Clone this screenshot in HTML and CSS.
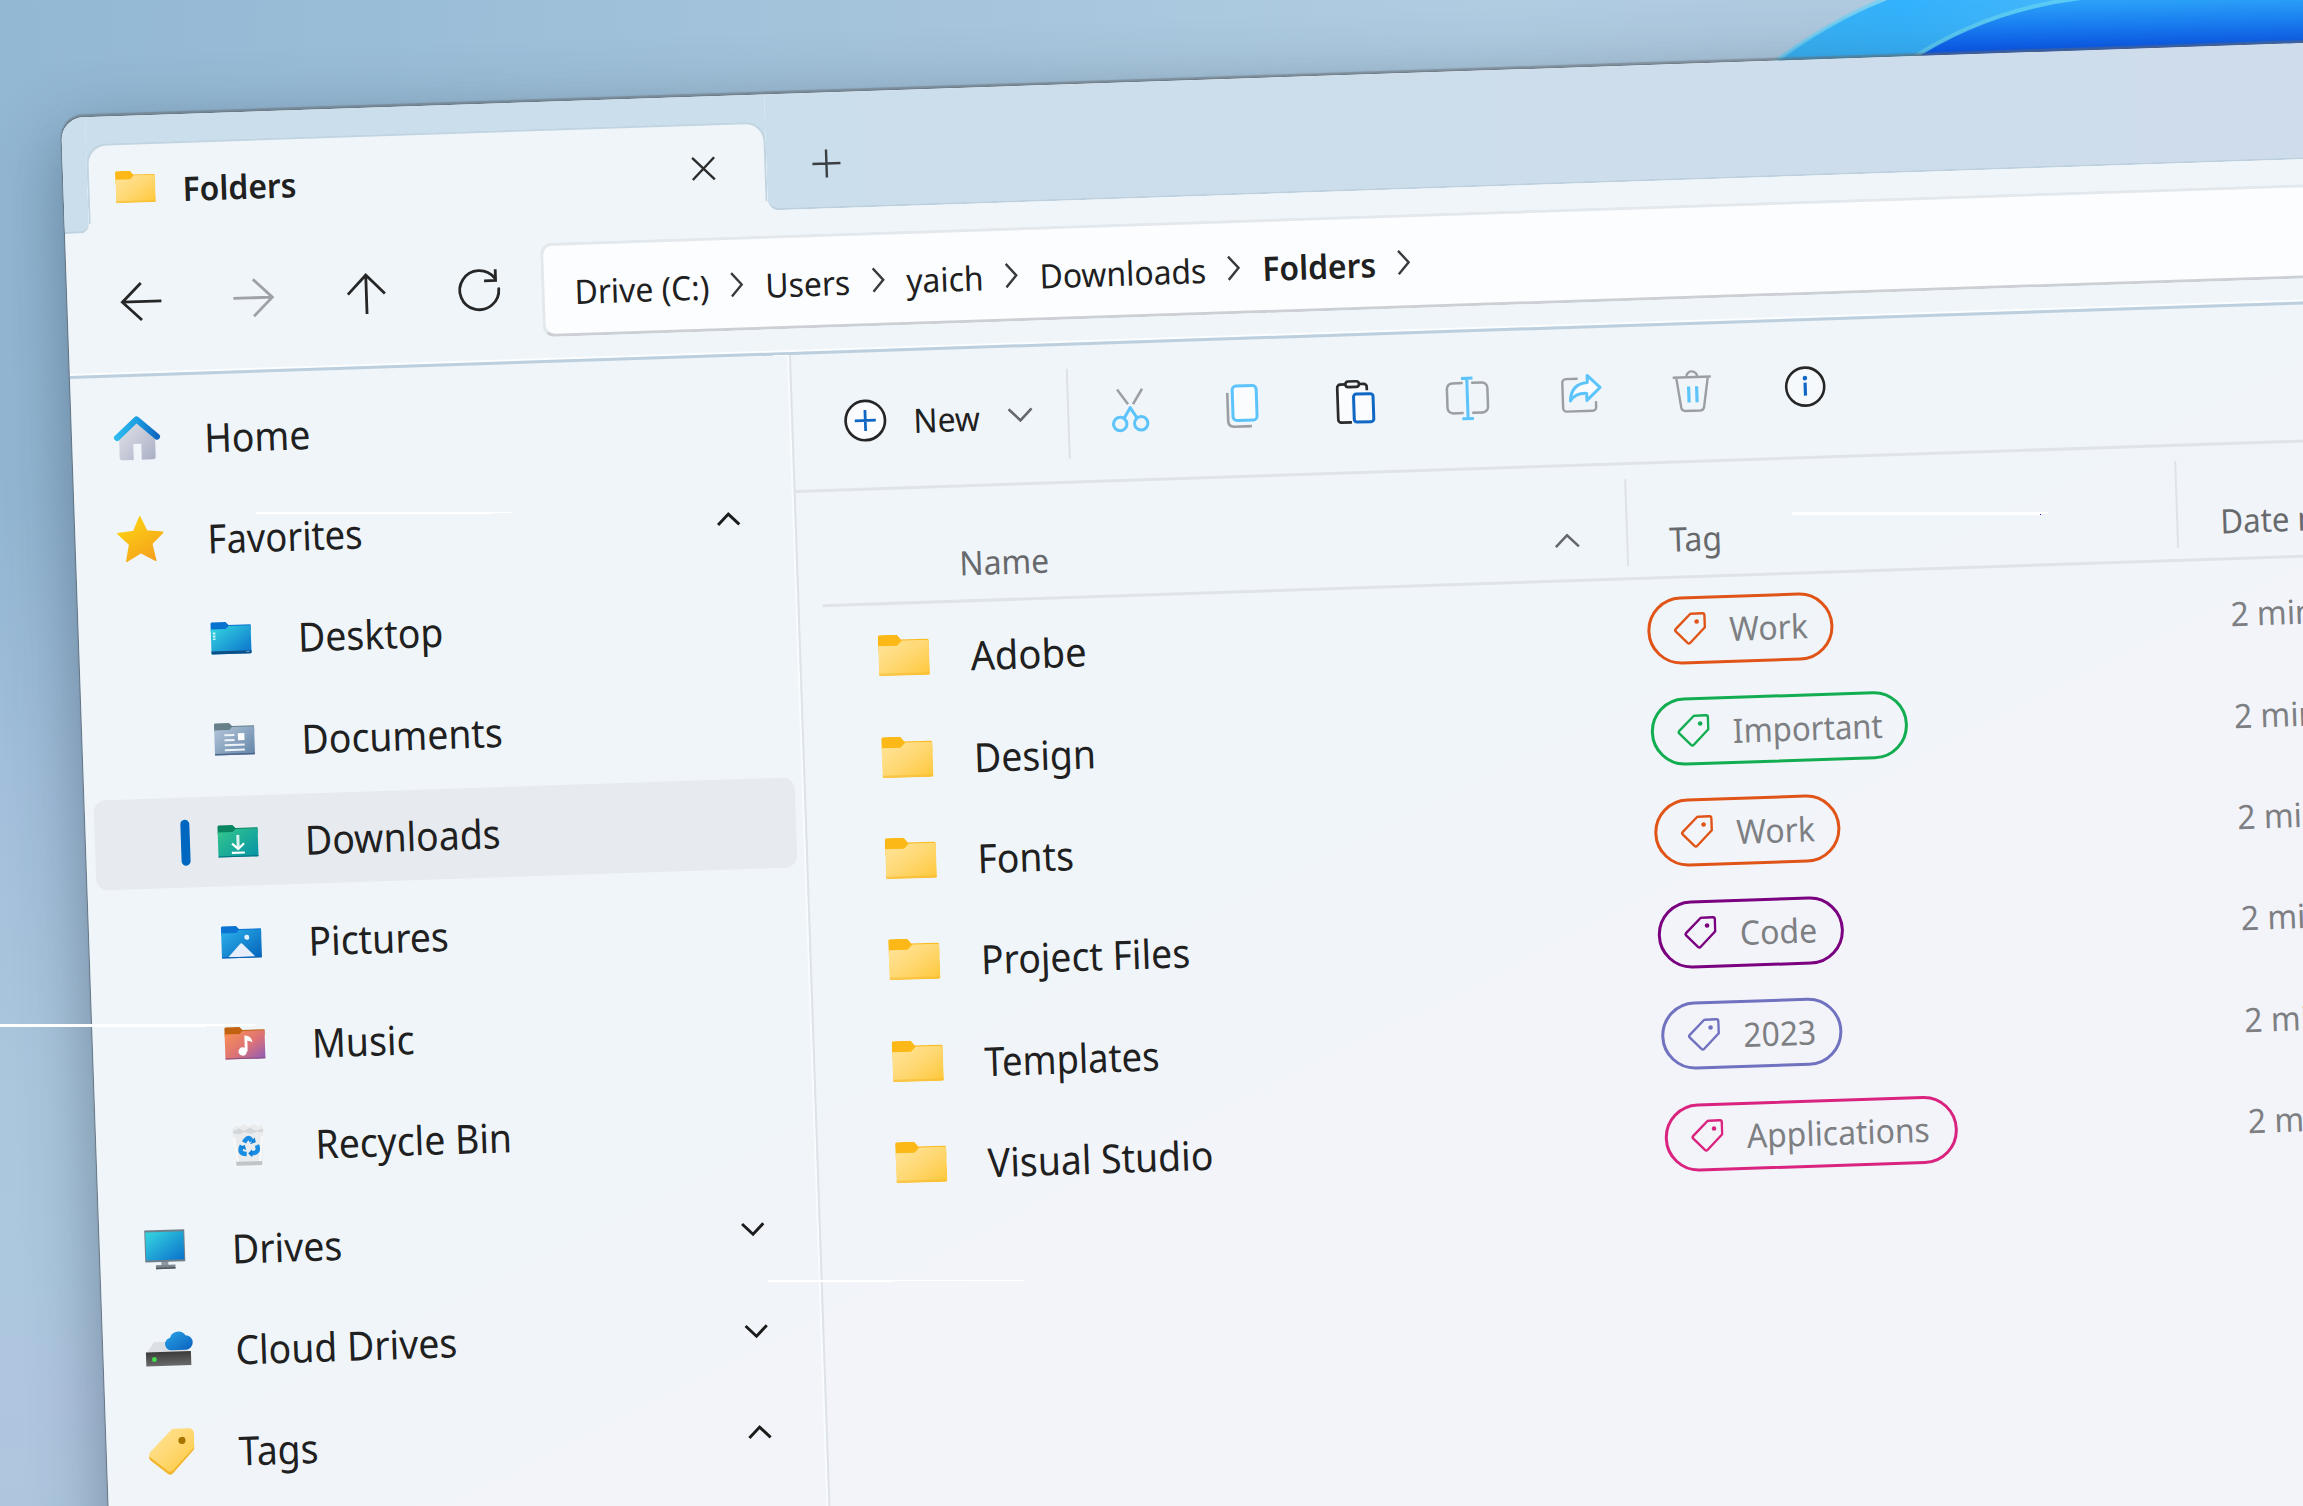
FILE: index.html
```html
<!DOCTYPE html>
<html lang="en">
<head>
<meta charset="utf-8">
<title>Folders</title>
<link rel="stylesheet" href="styles.css">
</head>
<body>
<svg class="defs" width="0" height="0" aria-hidden="true">
  <defs>
    <linearGradient id="gYellow" x1="0" y1="0" x2="1" y2="1"><stop offset="0" stop-color="#ffe49a"/><stop offset=".5" stop-color="#ffd873"/><stop offset="1" stop-color="#ffc83a"/></linearGradient>
    <linearGradient id="gDesk" x1="0" y1="0" x2="1" y2="1"><stop offset="0" stop-color="#36d6e0"/><stop offset="1" stop-color="#0a72cc"/></linearGradient>
    <linearGradient id="gDoc" x1="0" y1="0" x2="1" y2="1"><stop offset="0" stop-color="#b3c6d9"/><stop offset="1" stop-color="#6484a8"/></linearGradient>
    <linearGradient id="gDown" x1="0" y1="0" x2="1" y2="1"><stop offset="0" stop-color="#35c78c"/><stop offset="1" stop-color="#0593a6"/></linearGradient>
    <linearGradient id="gPic" x1="0" y1="0" x2="1" y2="1"><stop offset="0" stop-color="#2bb0ea"/><stop offset="1" stop-color="#0563bb"/></linearGradient>
    <linearGradient id="gMus" x1="0" y1="0" x2="1" y2="1"><stop offset="0" stop-color="#fb9350"/><stop offset=".55" stop-color="#dc7276"/><stop offset="1" stop-color="#8d5cba"/></linearGradient>
    <linearGradient id="gStar" x1="0" y1="0" x2=".6" y2="1"><stop offset="0" stop-color="#fdd910"/><stop offset="1" stop-color="#f6a41c"/></linearGradient>
    <linearGradient id="gHouse" x1="0" y1="0" x2="1" y2="1"><stop offset="0" stop-color="#e4e5e9"/><stop offset="1" stop-color="#a9afc6"/></linearGradient>
    <linearGradient id="gRoof" x1="0" y1="0" x2="1" y2="0"><stop offset="0" stop-color="#2db8ee"/><stop offset=".5" stop-color="#1b9fe2"/><stop offset="1" stop-color="#0e66c0"/></linearGradient>
    <linearGradient id="gCloud" x1="0" y1="0" x2="1" y2="1"><stop offset="0" stop-color="#2aa5e8"/><stop offset="1" stop-color="#0a60bd"/></linearGradient>
    <linearGradient id="gDrive" x1="0" y1="0" x2="0" y2="1"><stop offset="0" stop-color="#3b3b3b"/><stop offset="1" stop-color="#6a6a6a"/></linearGradient>
    <linearGradient id="gOuter" x1="0" y1="0" x2="1" y2="0"><stop offset="0" stop-color="#38b2f4"/><stop offset=".25" stop-color="#34b3fd"/><stop offset="1" stop-color="#5cc0fd"/></linearGradient>
    <linearGradient id="gInner" x1="0" y1="0" x2=".1" y2="1"><stop offset="0" stop-color="#2fa8fa"/><stop offset=".4" stop-color="#1a83f8"/><stop offset=".85" stop-color="#0350f0"/></linearGradient>
    <symbol id="folder" viewBox="0 0 51 41">
      <path d="M2 0h17l4 5H49a2 2 0 0 1 2 2v10H0V2a2 2 0 0 1 2-2z" fill="#fbb816"/>
      <path d="M0 11h19l5-5h25a2 2 0 0 1 2 2v31a2 2 0 0 1-2 2H2a2 2 0 0 1-2-2z" fill="url(#gYellow)"/>
      <path d="M0 38.500h51v.5a2 2 0 0 1-2 2H2a2 2 0 0 1-2-2z" fill="#f6bb2e" opacity=".6"/>
    </symbol>
    <symbol id="tag" viewBox="0 0 33 33">
      <path d="M17.500 1.500H29.500a2 2 0 0 1 2 2V15.500L16.500 30.500a2 2 0 0 1-2.800 0L2.500 19a2 2 0 0 1 0-2.800z" fill="none" stroke="currentColor" stroke-width="2.400" stroke-linejoin="round"/>
      <circle cx="23.500" cy="9.500" r="2.300" fill="currentColor"/>
    </symbol>
    <symbol id="down" viewBox="0 0 26 15"><path d="M1.500 1.500 13 13 24.500 1.500" fill="none" stroke="currentColor"/></symbol>
    <symbol id="up" viewBox="0 0 26 15"><path d="M1.500 13.500 13 2 24.500 13.500" fill="none" stroke="currentColor"/></symbol>
    <symbol id="next" viewBox="0 0 14 26"><path d="M1.300 1.300 12 13 1.300 24.700" fill="none" stroke="currentColor" stroke-width="2.500"/></symbol>
  </defs>
</svg>

<svg class="bloom" viewBox="0 0 538 64" aria-hidden="true">
  <path d="M4 66Q62 22 122 0H543V66z" fill="url(#gOuter)"/>
  <path d="M4 66Q62 22 122 -2" fill="none" stroke="#6fd2f6" stroke-width="4" opacity=".75"/>
  <path d="M143 61Q220 12 315 0H543V66H141z" fill="url(#gInner)"/>
  <path d="M143 61Q220 10 315 -2" fill="none" stroke="#5fd0f4" stroke-width="4" opacity=".85"/>
</svg>

<div class="window">
  <header class="titlebar">
    <div class="strip-left"></div>
    <div class="tab-slot">
      <div class="tab">
        <svg class="tab-icon"><use href="#folder"/></svg>
        <span class="txt md semi tab-title">Folders</span>
        <svg class="close" viewBox="0 0 24 24"><path d="M1 1 23 23M23 1 1 23" stroke="#2b2b2b" stroke-width="2.400" fill="none"/></svg>
      </div>
    </div>
    <div class="strip">
      <svg class="plus" viewBox="0 0 28 28"><path d="M14 0V28M0 14H28" stroke="#3a3f44" stroke-width="2.400"/></svg>
    </div>
  </header>

  <nav class="navbar">
    <div class="nav-buttons">
      <svg viewBox="0 0 44 44"><path d="M42 22H3M22 3.500 3 22 22 40.500" fill="none" stroke="#262626" stroke-width="2.800"/></svg>
      <svg viewBox="0 0 44 44"><path d="M2 22H41M22 3.500 41 22 22 40.500" fill="none" stroke="#9ea2a6" stroke-width="2.800"/></svg>
      <svg viewBox="0 0 44 44"><path d="M22 42V3M3.500 22 22 3 40.500 22" fill="none" stroke="#262626" stroke-width="2.800"/></svg>
      <svg viewBox="0 0 44 44"><path d="M41.400 21A19.500 19.500 0 1 1 37.500 10.200" fill="none" stroke="#262626" stroke-width="2.800" stroke-linecap="round"/><path d="M38.500 1.500V12.800H27" fill="none" stroke="#262626" stroke-width="2.800"/></svg>
    </div>
    <div class="address">
      <div class="crumbs md">
        <span>Drive (C:)</span><svg><use href="#next"/></svg>
        <span>Users</span><svg><use href="#next"/></svg>
        <span>yaich</span><svg><use href="#next"/></svg>
        <span>Downloads</span><svg><use href="#next"/></svg>
        <span class="semi">Folders</span><svg><use href="#next"/></svg>
      </div>
    </div>
  </nav>

  <div class="body">
    <aside class="sidebar">
      <div class="item">
        <svg class="ic" viewBox="0 0 48 46"><path d="M6 20 24 5 42 20V42a3 3 0 0 1-3 3H28V29H20V45H9a3 3 0 0 1-3-3z" fill="url(#gHouse)"/><path d="M4 22.500 24 4.500 44 22.500" fill="none" stroke="url(#gRoof)" stroke-width="6" stroke-linecap="round" stroke-linejoin="round"/></svg>
        <span class="txt lg">Home</span>
      </div>
      <div class="item">
        <svg class="ic" viewBox="0 0 48 46"><path d="M24 1 30.500 15.500 46.500 17.200 35 28.200 38.500 45 24 36.800 9.500 45 13 28.200 1.500 17.200 17.500 15.500z" fill="url(#gStar)" stroke="url(#gStar)" stroke-width="1.500" stroke-linejoin="round"/></svg>
        <span class="txt lg tight">Favorites</span>
        <svg class="chev"><use href="#up"/></svg>
      </div>
      <div class="item child">
        <i class="mark"></i>
        <svg class="ic sm" viewBox="0 0 40 32"><path d="M1 0H15l3 3H40V9H0V1z" fill="#0873cf"/><path d="M0 7H15l3-3H40V31a1 1 0 0 1-1 1H1a1 1 0 0 1-1-1z" fill="url(#gDesk)"/><path d="M0 29H40V31a1 1 0 0 1-1 1H1a1 1 0 0 1-1-1z" fill="#0a4f86"/><path d="M2 10H4.500V12H2zM2 13H4.500V15H2zM2 16H4.500V17.500H2z" fill="#c9f6fa"/><path d="M35 30H38" stroke="#7fa8c8" stroke-width="1"/></svg>
        <span class="txt lg">Desktop</span>
      </div>
      <div class="item child">
        <i class="mark"></i>
        <svg class="ic sm" viewBox="0 0 40 32"><path d="M1 0H15l3 3H40V9H0V1z" fill="#668089"/><path d="M0 7H15l3-3H40V31a1 1 0 0 1-1 1H1a1 1 0 0 1-1-1z" fill="url(#gDoc)"/><path d="M0 30.500H40V32H0z" fill="#4a668a"/><path d="M10 12H20M10 17H20M10 22H30M10 27H30" stroke="#eef3f8" stroke-width="2"/><path d="M23.500 10.500H30V17.500H23.500z" fill="#fff"/></svg>
        <span class="txt lg">Documents</span>
      </div>
      <div class="item child selected">
        <i class="mark"></i>
        <svg class="ic sm" viewBox="0 0 40 32"><path d="M1 0H15l3 3H40V9H0V1z" fill="#0a8562"/><path d="M0 7H15l3-3H40V31a1 1 0 0 1-1 1H1a1 1 0 0 1-1-1z" fill="url(#gDown)"/><path d="M0 30.800H40V32H0z" fill="#05707f"/><path d="M20 10V22.500" stroke="#d9f3ec" stroke-width="3"/><path d="M14 18.500 20 24 26 18.500" fill="none" stroke="#fff" stroke-width="2.200"/><path d="M13.500 27.800H26.500" stroke="#fff" stroke-width="2.200"/></svg>
        <span class="txt lg">Downloads</span>
      </div>
      <div class="item child">
        <i class="mark"></i>
        <svg class="ic sm" viewBox="0 0 40 32"><path d="M1 0H15l3 3H40V9H0V1z" fill="#0a74d2"/><path d="M0 7H15l3-3H40V31a1 1 0 0 1-1 1H1a1 1 0 0 1-1-1z" fill="url(#gPic)"/><path d="M6.500 31 18.500 18a1.800 1.800 0 0 1 2.600 0L33.500 31z" fill="#e6edfb"/><path d="M0 31H40V32H0z" fill="#0a5db0"/><circle cx="25.500" cy="11.500" r="2.500" fill="#e3f2fd"/></svg>
        <span class="txt lg">Pictures</span>
      </div>
      <div class="item child">
        <i class="mark"></i>
        <svg class="ic sm" viewBox="0 0 40 32"><path d="M1 0H15l3 3H40V9H0V1z" fill="#c0620f"/><path d="M0 7H15l3-3H40V31a1 1 0 0 1-1 1H1a1 1 0 0 1-1-1z" fill="url(#gMus)"/><path d="M0 31H40V32H0z" fill="#8a4a78"/><circle cx="17.500" cy="24.500" r="4.200" fill="#fff"/><path d="M19.700 24.500V8.500q7 0 8 7-2-1.500-5.200-1.700V24.500z" fill="#fff"/></svg>
        <span class="txt lg">Music</span>
      </div>
      <div class="item child">
        <i class="mark"></i>
        <svg class="ic bin" viewBox="0 0 34 42"><path d="M1.500 5 5 1 9 3 13 0 18 2.500 23 .5 27 3 31 1 32.500 6 30 41H4.500z" fill="#e9ebed"/><path d="M2 7 8 4 13 7 19 4 25 7 32 5 31.800 9 26 8 20 10 14 8 8 10 2 9z" fill="#d3d7da"/><path d="M3 13 6 38M31 13 28 38" stroke="#f9fafb" stroke-width="2"/><path d="M4.200 37.500H30.200L30 41.500H4.500z" fill="#bfc4c8"/><g fill="none" stroke="#1a8de2" stroke-width="4.600"><path d="M12.800 18.500Q17 10.500 20.500 17.500"/><path d="M25.500 21.500Q28.500 29.500 20 29.500"/><path d="M15 30Q6 29.500 10.500 21.500"/></g><path d="M18.500 20.500 24.500 18.500 23.500 13.500zM20.500 25.500V33.500L16.500 29.500zM7.500 23 13.500 21 14.500 26z" fill="#0f7fd8"/></svg>
        <span class="txt lg">Recycle Bin</span>
      </div>
      <div class="item">
        <svg class="ic" viewBox="0 0 48 46"><path d="M20 34H27V40H20z" fill="#8d99a3"/><path d="M14.500 39H34V43H14.500z" fill="#7c868f"/><path d="M14.500 41.500H34V43H14.500z" fill="#4d565e"/><path d="M4 4H44V36H4z" fill="#6f7f8a"/><path d="M5 6H43V34H5z" fill="url(#gDesk)"/></svg>
        <span class="txt lg">Drives</span>
        <svg class="chev"><use href="#down"/></svg>
      </div>
      <div class="item">
        <svg class="ic" viewBox="0 0 48 46"><path d="M10 14H38L46 26H1z" fill="#dcdfe3"/><path d="M1.500 24H46.500V38H1.500z" fill="url(#gDrive)"/><rect x="7.500" y="29" width="4.500" height="4.500" rx="1.500" fill="#3fe04a"/><path d="M27 22.500a6.200 6.200 0 0 1-1-12.300 8.800 8.800 0 0 1 15.600-2.300A7.300 7.300 0 0 1 41 22.500z" fill="url(#gCloud)"/></svg>
        <span class="txt lg">Cloud Drives</span>
        <svg class="chev"><use href="#down"/></svg>
      </div>
      <div class="item">
        <svg class="ic" viewBox="0 0 48 46"><path d="M27 2H42a4.500 4.500 0 0 1 4.500 4.500V19.500a4 4 0 0 1-1.200 3L24.500 44.500a4 4 0 0 1-5.600 0L2.500 31a4 4 0 0 1 0-5.600L24 3.200A4 4 0 0 1 27 2z" fill="#f2b52c"/><path d="M27 0H42a4.500 4.500 0 0 1 4.500 4.500V17.500a4 4 0 0 1-1.200 3L24.500 41.500a4 4 0 0 1-5.600 0L2.500 28a4 4 0 0 1 0-5.600L24 1.200A4 4 0 0 1 27 0z" fill="url(#gYellow)"/><circle cx="34.500" cy="12" r="3.600" fill="#a87400"/></svg>
        <span class="txt lg">Tags</span>
        <svg class="chev"><use href="#up"/></svg>
      </div>
    </aside>

    <main class="main">
      <div class="toolbar">
        <svg class="new-icon" viewBox="0 0 42 42"><circle cx="21" cy="21" r="19.700" fill="#fafcfe" stroke="#262626" stroke-width="2.700"/><path d="M21 10.500V31.500M10.500 21H31.500" stroke="#1068c4" stroke-width="2.800"/></svg>
        <span class="txt md new-label">New</span>
        <svg class="chev thin"><use href="#down"/></svg>
        <span class="sep"></span>
        <div class="tools">
          <svg viewBox="0 0 44 44"><path d="M9.500 1.500 20 16.500M34.500 1.500 25 16.500" stroke="#9b9fa3" stroke-width="2.500"/><path d="M22 20 15.500 30.500M22 20 28.500 30.500" stroke="#5cc4fb" stroke-width="3" stroke-linecap="round"/><circle cx="11.500" cy="36" r="6.700" fill="none" stroke="#5cc4fb" stroke-width="3"/><circle cx="32.500" cy="36" r="6.700" fill="none" stroke="#5cc4fb" stroke-width="3"/></svg>
          <svg viewBox="0 0 44 44"><path d="M7.500 8.500V36.500q0 6 6 6H31" fill="none" stroke="#9b9fa3" stroke-width="2.600"/><rect x="12.500" y="2" width="24" height="34.500" rx="4" fill="#fafcfe" stroke="#5cc4fb" stroke-width="3"/></svg>
          <svg viewBox="0 0 44 44"><path d="M13 4H7.500a3 3 0 0 0-3 3V39a3 3 0 0 0 3 3H18V13H33V7a3 3 0 0 0-3-3H25z" fill="#fafcfe"/><path d="M13 4H7.500a3 3 0 0 0-3 3V39a3 3 0 0 0 3 3H18M26 4H31a3 3 0 0 1 3 3V10.500" fill="none" stroke="#2a2a2a" stroke-width="2.700"/><rect x="12.800" y="1.200" width="13.500" height="5.600" rx="2.800" fill="#eff5f9" stroke="#2a2a2a" stroke-width="2.600"/><rect x="20.500" y="14" width="19.500" height="28" rx="2.800" fill="#fafcfe" stroke="#1068c4" stroke-width="3"/></svg>
          <svg viewBox="0 0 44 44"><path d="M18 6.500H7.500a5.500 5.500 0 0 0-5.500 5.500V31a5.500 5.500 0 0 0 5.500 5.500H18M26.500 6.500H37a5.500 5.500 0 0 1 5.500 5.500V31a5.500 5.500 0 0 1-5.500 5.500H26.500" fill="none" stroke="#9b9fa3" stroke-width="2.500"/><path d="M22.200 2V42M16.500 1.800H28M16.500 42.200H28" stroke="#5cc4fb" stroke-width="3"/></svg>
          <svg viewBox="0 0 44 44"><path d="M20 6H8a3.500 3.500 0 0 0-3.500 3.500V35a3.500 3.500 0 0 0 3.500 3.500H34a3.500 3.500 0 0 0 3.500-3.500V29" fill="none" stroke="#9b9fa3" stroke-width="2.400"/><path d="M29.500 3 42 15.500 28.500 28V21Q17.500 20 12 28 13 11 29.500 10z" fill="#fafcfe" stroke="#5cc4fb" stroke-width="3" stroke-linejoin="round"/></svg>
          <svg viewBox="0 0 44 44"><path d="M3 8.200H41M16.500 8a5.500 5.500 0 0 1 11 0M6.500 8.500 10.500 38.500a4 4 0 0 0 3.800 3.300H29.500a4 4 0 0 0 3.800-3.300L38 8.500" fill="none" stroke="#9b9fa3" stroke-width="2.400"/><path d="M18.500 17.500V33.500M26.500 17.500V33.500" stroke="#5cc4fb" stroke-width="3.200"/></svg>
          <svg viewBox="0 0 44 44"><circle cx="22" cy="21.500" r="19" fill="#f6f9fc" stroke="#262626" stroke-width="2.600"/><circle cx="22" cy="13" r="2.300" fill="#1068c4"/><path d="M22 17.500V30.500" stroke="#1068c4" stroke-width="3.200"/></svg>
        </div>
      </div>

      <div class="thead">
        <div class="cell c-name"><span class="txt md">Name</span><svg class="chev thin"><use href="#up"/></svg></div>
        <span class="vsep"></span>
        <div class="cell c-tag"><span class="txt md">Tag</span></div>
        <span class="vsep"></span>
        <div class="cell c-date"><span class="txt md snug">Date modified</span></div>
      </div>

      <div class="rows">
        <div class="row"><svg class="fold"><use href="#folder"/></svg><span class="txt lg wide">Adobe</span><div class="pill orange w-work"><svg><use href="#tag"/></svg><span class="txt md">Work</span></div><span class="txt md date">2 minutes ago</span></div>
        <div class="row"><svg class="fold"><use href="#folder"/></svg><span class="txt lg">Design</span><div class="pill green w-important"><svg><use href="#tag"/></svg><span class="txt md snug">Important</span></div><span class="txt md date">2 minutes ago</span></div>
        <div class="row"><svg class="fold"><use href="#folder"/></svg><span class="txt lg">Fonts</span><div class="pill orange w-work"><svg><use href="#tag"/></svg><span class="txt md">Work</span></div><span class="txt md date">2 minutes ago</span></div>
        <div class="row"><svg class="fold"><use href="#folder"/></svg><span class="txt lg">Project Files</span><div class="pill purple w-work"><svg><use href="#tag"/></svg><span class="txt md wide">Code</span></div><span class="txt md date">2 minutes ago</span></div>
        <div class="row"><svg class="fold"><use href="#folder"/></svg><span class="txt lg tight">Templates</span><div class="pill indigo w-year"><svg><use href="#tag"/></svg><span class="txt md">2023</span></div><span class="txt md date">2 minutes ago</span></div>
        <div class="row"><svg class="fold"><use href="#folder"/></svg><span class="txt lg">Visual Studio</span><div class="pill pink w-apps"><svg><use href="#tag"/></svg><span class="txt md">Applications</span></div><span class="txt md date">2 minutes ago</span></div>
      </div>
    </main>
  </div>
</div>

<svg class="streaks" viewBox="0 0 2303 1506" aria-hidden="true">
  <g fill="#fff">
    <path d="M256 512H513V513H493V514H256z"/>
    <path d="M0 1024H256V1026H206V1027H0z"/>
    <path d="M768 1280H1024V1281H893V1282H768z"/>
    <path d="M1792 512H2048V514H2040V515H1792z"/>
    <path d="M2048 256H2230V257H2048z"/>
  </g>
  <path d="M2040 514h1v1h-1z" fill="#1a1ad0"/>
</svg>
</body>
</html>
```
FILE: styles.css
```css
* { box-sizing: border-box; }

html { overflow: hidden; }

body {
  margin: 0;
  width: 2303px;
  height: 1506px;
  overflow: hidden;
  position: relative;
  font-family: "Noto Sans", "Open Sans", sans-serif;
  color: #202020;
  background:
    linear-gradient(90deg, rgba(163, 195, 219, 0) 0, #a3c3db 800px, #b0cce1 1500px, #b0cae0 1800px) top / 100% 140px no-repeat,
    linear-gradient(180deg, #92b8d4 0, #93b7d3 500px, #a3bfdb 800px, #abc7dd 1100px, #acc8de 1280px, #b0c5e0 1400px, #adc6dd 1506px);
}

svg { display: block; flex: none; overflow: visible; }
.defs { position: absolute; }

.bloom {
  position: absolute;
  left: 1765px;
  top: 0;
  width: 538px;
  height: 64px;
  overflow: hidden;
}

.window {
  position: absolute;
  left: 61px;
  top: 118px;
  width: 2500px;
  height: 1600px;
  display: flex;
  flex-direction: column;
  border-radius: 22px 0 0 0;
  transform-origin: 0 0;
  transform: matrix(1, -0.0334, 0.0343, 1, 0, 0);
  background: linear-gradient(155deg, #eff5f9 0, #eff5f9 45%, #f3f4fa 62%);
  box-shadow: 0 0 0 1px rgba(90, 100, 110, .45), 0 -2px 1px 1px rgba(100, 105, 110, .5), 0 18px 70px rgba(45, 65, 85, .48);
}

/* text */
.txt { display: inline-block; white-space: nowrap; transform: scaleX(.95); transform-origin: 0 50%; }
.lg { font-size: 40px; line-height: 56px; transform: scaleX(.933); }
.md { font-size: 33.500px; line-height: 46px; }
.snug { transform: scaleX(.93); }
.tight { transform: scaleX(.907); }
.wide { transform: scaleX(.955); }
.semi { font-weight: 600; }

/* title bar */
.titlebar { display: flex; height: 116px; flex: none; }
.strip-left {
  width: 24px;
  background: #cbdeeb;
  border-radius: 22px 0 9px 0;
  border-bottom: 2px solid #bdd0df;
}
.tab-slot { width: 679px; padding-top: 27px; background: linear-gradient(#cbdeeb 70px, transparent 70px); }
.tab {
  height: 80px;
  display: flex;
  align-items: center;
  padding: 8px 49px 0 26px;
  background: #eff5f9;
  border: 2px solid #c1d4e1;
  border-bottom: 0;
  border-radius: 20px 20px 0 0;
}
.tab-icon { width: 40px; height: 32px; margin-top: -2px; }
.tab-title { margin: 3px auto 0 27px; }
.close { width: 24px; height: 24px; }
.strip {
  flex: 1;
  padding: 57px 0 0 46px;
  background: linear-gradient(90deg, #cbdeeb, #cfdceb);
  border-bottom: 2px solid #bdd0df;
  border-radius: 0 0 0 12px;
}
.plus { width: 28px; height: 28px; }

/* navigation bar */
.navbar {
  display: flex;
  height: 145px;
  flex: none;
  padding-top: 25px;
  border-bottom: 3px solid #bccfde;
  box-shadow: inset 0 -2px 0 #fbfdff;
}
.nav-buttons { display: flex; gap: 68.700px; margin: 23px 40px 0 51.500px; }
.nav-buttons svg { width: 44px; height: 44px; }
.address {
  flex: 1;
  height: 94px;
  padding: 1px 0 0 30px;
  display: flex;
  align-items: center;
  background: #fbfdff;
  border: 3px solid #e3e8ed;
  border-bottom-color: #cccfd4;
  border-radius: 12px;
}
.crumbs { display: flex; align-items: center; gap: 22.500px; transform: scaleX(.95); transform-origin: 0 50%; white-space: nowrap; }
.crumbs svg { width: 14px; height: 26px; color: #3a3a3a; }
.crumbs span { position: relative; top: 1px; }

.body { display: flex; flex: 1; }

/* sidebar */
.sidebar {
  width: 721px;
  padding: 16px 9px 0 9px;
  display: flex;
  flex-direction: column;
  gap: 11.400px;
  border-right: 2px solid #dee3e9;
  box-shadow: inset -2px 0 0 #f9fcfe;
}
.item { display: flex; align-items: center; height: 90px; flex: none; padding: 0 45px 0 32px; border-radius: 12px; }
.item .txt { margin-top: 3px; }
.ic { width: 48px; height: 46px; margin-right: 43px; }
.chev { width: 26px; height: 15px; margin-left: auto; color: #1c1c1c; stroke-width: 3.200; }
.sidebar .chev { width: 24px; height: 14px; }
.child { padding-left: 86px; }
.mark { width: 9px; height: 46px; margin-right: 28px; border-radius: 5px; }
.ic.sm { width: 40px; height: 32px; margin-right: 47px; }
.ic.bin { width: 34px; height: 42px; margin: 0 50px 0 3px; }
.selected { background: #e7ebef; }
.selected .mark { background: #0067c0; }

/* main area */
.main { flex: 1; }
.toolbar { display: flex; align-items: center; height: 138px; padding-left: 50.500px; border-bottom: 3px solid #e0e4e9; }
.new-icon { width: 42px; height: 42px; margin-right: 27px; }
.new-label { width: 94px; margin-top: 3px; }
.chev.thin { margin-left: 0; color: #64686c; stroke-width: 2.600; }
.sep { width: 2px; height: 90px; margin: 0 5px 0 34px; background: #dee2e8; }
.tools { display: flex; gap: 68.600px; margin: -3px 0 0 34px; }
.tools svg { width: 44px; height: 44px; }

.thead { display: flex; height: 115px; margin-left: 23px; border-bottom: 3px solid #e0e4e9; color: #67696c; }
.cell { display: flex; align-items: center; padding-top: 37px; }
.cell .chev { margin-top: -2px; }
.c-name { width: 805px; padding-left: 138px; padding-right: 46px; justify-content: space-between; }
.c-tag { width: 548px; padding-left: 41px; }
.c-date { flex: 1; padding-left: 42px; }
.vsep { width: 2px; margin: 14px 0 11px; background: #dfe3e9; }

.rows { padding-left: 77px; }
.row { display: grid; grid-template-columns: 92px 677px 583px auto; align-items: center; height: 101.400px; }
.row > .txt { margin-top: 5px; }
.fold { width: 51px; height: 41px; }
.pill {
  display: flex;
  align-items: center;
  gap: 23px;
  height: 68px;
  margin-top: 2px;
  padding-left: 23px;
  border: 3px solid currentColor;
  border-radius: 34px;
}
.pill svg { width: 33px; height: 33px; margin-top: -2px; }
.pill .txt, .date { color: #7d7f83; }
.pill .txt { margin-top: -1px; }
.w-work { width: 186px; }
.w-important { width: 257px; }
.w-year { width: 181px; }
.w-apps { width: 293px; }
.orange { color: #e05417; }
.green { color: #12ad50; }
.purple { color: #7a007f; }
.indigo { color: #7071bf; }
.pink { color: #d9237f; }

.streaks { position: absolute; inset: 0; width: 2303px; height: 1506px; pointer-events: none; }
```
